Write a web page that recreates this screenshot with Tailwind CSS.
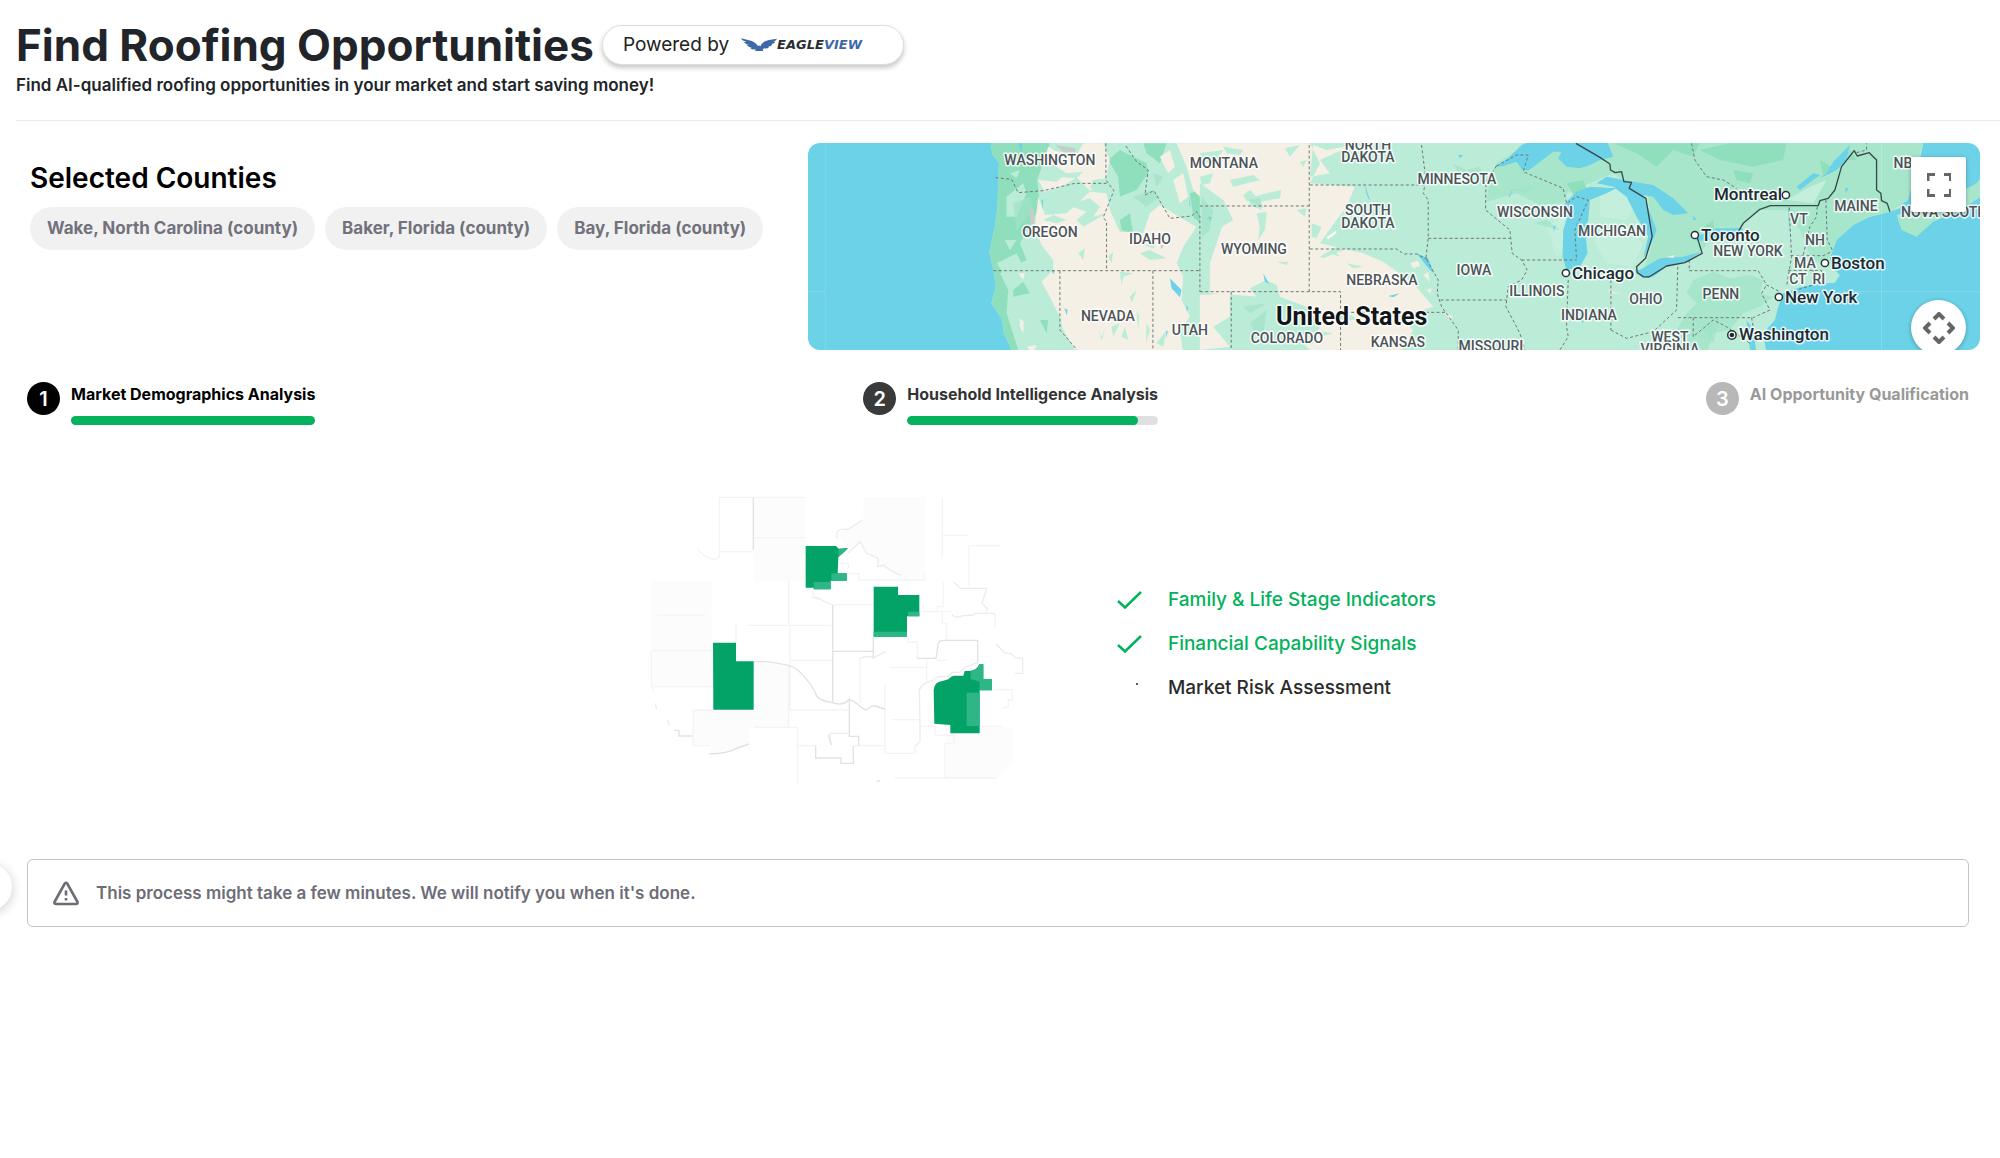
<!DOCTYPE html>
<html lang="en">
<head>
    <meta charset="UTF-8">
    <meta name="viewport" content="width=device-width, initial-scale=1.0">
    <title>Find Roofing Opportunities</title>
    <script src="https://cdn.jsdelivr.net/npm/@tailwindcss/browser@4"></script>
</head>
<body class="relative min-h-screen overflow-x-hidden bg-white font-['Inter',sans-serif] text-black">

    <!-- Sidebar toggle, mostly off the left edge -->
    <button aria-label="Open sidebar" class="absolute -left-9 top-[863px] h-12 w-12 rounded-full bg-white shadow-[0_2px_12px_rgba(0,0,0,0.2)]"></button>

    <header class="ml-4 border-b border-[#e9e9eb] pt-5 pb-6">
        <div class="flex items-center gap-2">
            <h1 class="text-[44px] leading-[50px] font-bold text-[#212529]">Find Roofing Opportunities</h1>
            <div class="flex h-10 w-[302px] items-center gap-3 rounded-full border border-[#dedede] bg-white pl-5 shadow-[0_3px_5px_rgba(0,0,0,0.22)]">
                <span class="text-[19px] leading-6 text-[#212121]">Powered by</span>
                <span class="flex items-center">
                    <svg class="h-[14px] w-9" viewBox="0 0 108 42" fill="#3e68a8" aria-hidden="true">
                        <path d="M0 1 L24 7 Q43 11 51 25 L54 22 L58 25 Q64 9 84 6 L108 2 Q106 8 98 10 L103 12 Q98 18 91 18 L94 20 Q89 26 82 25 L84 28 Q78 33 70 31 L65 34 L67 39 L42 39 L45 34 Q34 37 27 29 L34 28 Q22 28 17 20 L25 20 Q14 20 9 12 L17 12 Q4 9 0 1Z"/>
                    </svg>
                    <span class="font-['DejaVu_Sans',sans-serif] text-[13px] leading-4 font-bold text-[#2a2d34] italic">EAGLE<span class="text-[#3e68a8]">VIEW</span></span>
                </span>
            </div>
        </div>
        <p class="mt-1 text-[17px] leading-[22px] font-semibold text-[#212529]">Find AI-qualified roofing opportunities in your market and start saving money!</p>
    </header>

    <main class="pr-5 pl-[27px]">
        <section class="flex pt-[22px]">
            <div class="flex-1 pt-[17px] pl-[3px]">
                <h2 class="text-[28px] leading-9 font-semibold">Selected Counties</h2>
                <ul class="mt-[11px] flex gap-[10px] text-[17px] leading-[43px] font-bold whitespace-nowrap text-[#72727c]">
                    <li class="rounded-full bg-[#f1f1f1] px-[17px]">Wake, North Carolina (county)</li>
                    <li class="rounded-full bg-[#f1f1f1] px-[17px]">Baker, Florida (county)</li>
                    <li class="rounded-full bg-[#f1f1f1] px-[17px]">Bay, Florida (county)</li>
                </ul>
            </div>

            <div class="relative h-[207px] w-3/5 overflow-hidden rounded-xl bg-[#6bd2e8]">
                <svg class="h-full w-full" viewBox="0 0 1172 207" preserveAspectRatio="xMidYMid slice" role="img" aria-label="Map of the United States">
                    <g transform="scale(0.33333) translate(-24 -39)">
                        <!-- land -->
                        <path fill="#bbecd8" d="M571 30 L578 75 L597 100 L592 240 L585 290 L568 365 L580 420 L588 470 L574 520 L605 565 L612 610 L640 670 L2900 670 L2890 610 L2925 570 L2935 530 L2950 490 L3000 472 L3050 462 L3105 458 L3120 435 L3095 410 L3090 385 L3110 330 L3160 285 L3205 262 L3270 245 L3300 235 L3310 200 L3360 90 L3372 30Z"/>
                        <path fill="#a8e6cc" d="M2090 100 L2200 30 L3372 30 L3350 110 L3325 210 L3270 245 L3205 262 L3160 285 L3110 330 L3090 385 L3040 400 L3000 300 L2960 240 L2880 240 L2810 300 L2760 290 L2700 370 L2560 410 L2530 430 L2560 330 L2545 200 L2440 130 L2300 190 L2290 220 L2220 225 L2150 190 L2060 215 L2070 140Z M2680 450 L2740 425 L2790 445 L2850 435 L2890 450 L2880 490 L2920 500 L2880 530 L2830 550 L2790 600 L2740 610 L2720 670 L2600 670 L2590 620 L2630 600 L2660 550 L2690 520 L2660 490Z M3305 300 L3350 320 L3400 275 L3480 240 L3560 190 L3560 120 L3530 160 L3400 230 L3290 255Z"/>
                        <path fill="#c5efdd" d="M2240 290 L2300 250 L2320 340 L2270 380Z M2380 330 L2480 290 L2530 340 L2500 410 L2420 400Z M2400 190 L2460 170 L2500 230 L2480 270 L2400 260Z M2960 210 L3030 170 L3080 150 L3040 220Z"/>
                        <!-- forests -->
                        <path fill="#8fdfbc" d="M571 30 L578 75 L597 100 L592 240 L585 290 L568 365 L580 420 L588 470 L574 520 L605 565 L612 610 L640 670 L655 660 L620 550 L625 480 L600 430 L680 390 L660 340 L720 230 L712 150 L750 40Z M925 90 L960 60 L1040 100 L1045 130 L1010 180 L960 200 L955 140Z M640 480 L670 455 L690 490 L640 500Z M720 570 L745 570 L740 610Z M1030 40 L1100 40 L1080 100 L1040 70Z M960 270 L990 250 L1000 310 L965 300Z M1170 190 L1200 180 L1200 280 L1180 260Z M2440 40 L2700 40 L2680 80 L2620 60 L2570 110 L2510 70Z M2700 60 L2790 40 L2960 40 L2950 90 L2860 110 L2760 90Z M2300 160 L2350 150 L2370 200 L2330 210Z M2700 300 L2740 270 L2745 310Z M2800 120 L2860 130 L2850 160 L2810 150Z M3060 90 L3110 120 L3070 140Z M3150 60 L3170 90 L3140 90Z"/>
                        <path fill="#bbecd8" d="M620 200 L670 160 L680 190 L650 260 L620 260Z M630 130 L660 120 L650 145Z M615 330 L650 330 L630 360Z M590 400 L650 370 L665 400 L610 430Z"/>
                        <!-- dry land -->
                        <path fill="#f4f0e5" d="M745 50 L765 62 L830 75 L850 40 L910 40 L930 90 L915 160 L870 182 L830 142 L790 168 L735 185 L715 150 L770 155 L800 130 L770 110 L735 90Z M715 200 L735 255 L800 250 L870 185 L920 190 L930 240 L960 305 L1030 310 L1050 250 L1080 225 L1140 262 L1190 290 L1150 350 L1130 400 L1150 440 L1145 510 L1170 560 L1140 600 L1150 670 L832 670 L790 600 L780 560 L750 500 L725 455 L760 420 L760 390 L725 345 L705 290Z M1130 40 L1530 40 L1560 100 L1530 160 L1665 170 L1640 230 L1595 290 L1560 340 L1690 370 L1750 395 L1840 460 L1900 530 L1800 560 L1840 600 L1800 670 L1540 670 L1480 610 L1380 500 L1230 490 L1230 400 L1270 280 L1230 230 L1180 180 L1160 110Z M660 565 L672 575 L670 610 L660 590Z M680 650 L710 645 L700 670Z M655 430 L675 430 L670 450Z M1560 90 L1660 45 L1580 60 L1540 45 L1530 140 L1590 130Z M1830 400 L1855 392 L1860 408 L1840 415Z M1870 435 L1885 425 L1890 455Z M1880 480 L1895 475 L1892 492Z M1930 545 L1960 560 L1950 570Z M1200 495 L1290 490 L1290 560 L1240 590 L1290 650 L1200 660Z M1080 80 L1110 60 L1125 110 L1105 130Z M1120 150 L1150 130 L1165 200 L1140 220Z"/>
                        <!-- green patches over dry land -->
                        <path fill="#bbecd8" d="M740 120 L800 130 L850 125 L830 145 L770 140Z M730 270 L760 255 L800 270 L770 280Z M800 225 L870 205 L900 230 L880 260 L920 250 L850 290 L830 270 L860 245Z M880 150 L925 145 L940 170 L890 180 L870 175Z M835 370 L855 355 L850 390Z M925 380 L940 365 L935 400Z M1020 370 L1050 360 L1100 385 L1050 390Z M1030 345 L1070 340 L1060 355Z M960 425 L1000 430 L970 440 L965 465Z M990 500 L1010 480 L995 520Z M895 600 L905 620 L918 590 L905 630Z M935 590 L960 580 L940 620Z M965 620 L975 590 L985 630Z M1010 540 L1018 560 L1015 600Z M1040 580 L1050 600 L1038 640Z M1070 640 L1100 600 L1090 650Z M1200 70 L1270 60 L1250 90 L1210 100Z M1270 50 L1330 60 L1320 75 L1280 70Z M1290 150 L1360 135 L1380 150 L1300 170Z M1330 195 L1350 180 L1370 200 L1340 215Z M1345 205 L1400 190 L1445 180 L1440 205 L1380 215 L1385 240 L1350 225Z M1370 250 L1400 245 L1395 300 L1375 330 L1380 290Z M1200 140 L1240 130 L1230 160 L1205 165Z M1455 55 L1500 45 L1470 80Z M1500 95 L1520 90 L1510 110Z M1490 240 L1520 235 L1515 260Z M1535 280 L1565 290 L1550 325 L1535 320Z M1560 380 L1610 350 L1630 360 L1570 385Z M1600 360 L1620 380 L1590 370Z M1200 160 L1270 210 L1300 270 L1250 300 L1230 390 L1200 440Z M1430 395 L1465 395 L1460 405Z M1350 475 L1400 450 L1430 465 L1440 500 L1520 530 L1560 590 L1540 640 L1500 650 L1420 640 L1360 660 L1300 610 L1330 560 L1300 540 L1370 500Z M1380 345 L1400 340 L1390 355Z M1600 570 L1640 550 L1680 570Z M1540 600 L1600 610 L1560 620Z M1640 400 L1690 410 L1660 415Z"/>
                        <path fill="#9fe3c7" opacity=".7" d="M640 220 L690 200 L700 240 L650 300Z M1000 200 L1060 180 L1080 200 L1040 230Z M1060 130 L1090 140 L1070 170Z M1205 200 L1240 240 L1230 300 L1205 320Z M1345 210 L1380 205 L1390 235Z M1350 580 L1400 540 L1390 620 L1360 600Z M1960 100 L2000 120 L1980 140Z M2200 280 L2240 270 L2280 300Z M2130 180 L2200 170 L2180 190Z M1330 530 L1400 520 L1350 550Z M2690 500 L2710 480 L2700 530Z M2700 590 L2760 560 L2740 640Z M2000 120 L2040 110 L2050 140Z"/>
                        <path fill="#c9cdca" d="M765 45 L800 50 L828 55 L825 72 L790 65Z M690 238 L702 240 L705 280 L690 285Z M1080 345 L1092 345 L1086 357Z"/>
                        <path fill="#fff" d="M1580 322 L1608 302 L1610 308 L1585 328Z"/>
                        <!-- lakes -->
                        <path fill="#6bd2e8" d="M2085 110 L2125 85 L2165 45 L2200 30 L2420 30 L2440 80 L2400 90 L2370 105 L2340 115 L2300 110 L2275 85 L2285 65 L2260 65 L2215 100 L2185 122 L2165 118 L2150 95 L2110 108Z M2290 225 L2330 185 L2370 170 L2450 175 L2420 190 L2370 210 L2365 270 L2355 300 L2363 370 L2340 410 L2300 420 L2288 380 L2290 300 L2305 250Z M2420 140 L2500 155 L2560 165 L2620 205 L2665 250 L2620 255 L2590 240 L2560 200 L2530 195 L2570 300 L2555 340 L2530 385 L2545 320 L2510 260 L2480 200 L2440 170 L2390 160Z M2520 420 L2580 385 L2650 380 L2705 365 L2650 400 L2600 410 L2560 440 L2530 445 L2505 420Z M2685 322 L2750 295 L2830 295 L2820 315 L2750 330 L2690 332Z M1110 445 L1145 480 L1140 502 L1115 475Z M655 40 L668 40 L665 70Z M725 210 L730 208 L728 240Z M793 535 L803 540 L801 555Z M1168 200 L1172 230 L1168 225Z M1160 525 L1165 535 L1160 545Z M1100 600 L1104 605 L1098 625Z M755 422 L765 422 L760 432Z M1225 260 L1235 262 L1230 272Z M1390 430 L1408 462 L1395 455Z M1690 150 L1712 215 L1703 200Z M1850 370 L1885 385 L1902 430 L1890 420Z M1765 498 L1800 490 L1780 502Z M1975 75 L1990 75 L1980 85Z M2125 200 L2140 175 L2130 200Z M2260 290 L2268 285 L2262 305Z M2345 570 L2352 572 L2347 580Z M3080 130 L3100 95 L3150 45 L3140 90 L3110 120 L3060 145Z M2990 170 L3040 130 L3060 135 L3000 180Z M2965 235 L2970 235 L2968 320Z M3135 175 L3145 175 L3138 190Z M2840 570 L2860 600 L2870 670 L2850 660 L2845 610Z M2680 255 L2690 270 L2680 270Z"/>
                        <path fill="#fbe5e2" d="M2425 478 L2440 485 L2465 490 L2430 490Z M2600 380 L2625 375 L2620 384Z"/>
                        <!-- tile seams -->
                        <path stroke="#fff" stroke-opacity=".25" stroke-width="2" fill="none" d="M76 40V660 M24 485H76 M3245 40V660 M3120 485H3540"/>
                        <!-- state borders -->
                        <g fill="none" stroke="#6e7876" stroke-width="3" stroke-dasharray="9 7">
                            <path d="M587 143 L635 148 L655 188 L730 182 L825 160 L922 160 M918 40 V150 L942 182 L910 262 L920 275 V420 M580 422 H1200 M978 48 L1010 95 L1045 120 L1035 195 L1062 182 L1110 265 L1175 258 L1190 245 L1200 260 V485 M780 422 V600 L832 660 M1059 422 V660"/>
                            <path d="M1200 228 H1528 M1528 45 V485 M1200 485 H1622 V660 M1294 485 V660 M1530 165 H1875 M1530 357 H1790 L1812 372 H1850 L1882 388 M1865 45 L1878 150 L1870 190 L1885 210 V325 L1878 385 L1915 450 L1912 490 L1925 530 L1975 600 V660 M1885 325 H2130 M1922 510 H2120 M1622 547 H1940 M2090 108 L2058 155 L2057 240 L2130 300 L2137 370 L2165 390 L2182 420 L2165 450 L2125 470 L2118 530 L2160 610 L2175 660 M2165 390 H2330 M2090 108 L2150 75 H2185 L2170 125 L2290 175 L2300 220 L2330 200 L2365 210 L2325 300 L2330 390 M2305 450 L2300 590 L2305 620 L2280 660 M2433 450 V600 M2433 600 L2480 625 L2560 605 L2630 540 L2634 405 M2668 390 V422 H2875 L2900 465 L2940 485 M2634 563 H2860 L2910 540 L2885 490 L2900 465 M2680 563 V620 L2740 570 L2780 590 L2850 640 M2855 563 L2870 640"/>
                            <path d="M2675 40 L2685 90 L2720 140 L2770 150 L2810 175 M2968 232 L2975 380 L2960 470 M3052 230 L3050 260 L3030 290 L3010 375 M3078 210 L3082 330 L3100 365 M2972 377 L3070 377 L3095 365 M2965 421 H3065 V460 M3040 421 V465 L2990 480 M3170 68 L3200 60 V40 M2550 650 L2600 620"/>
                        </g>
                        <path fill="none" stroke="#38474b" stroke-width="4" stroke-linejoin="round" d="M2328 40 L2400 82 L2430 102 L2432 120 L2446 128 L2465 125 L2472 155 L2495 157 L2488 175 L2538 205 L2557 320 L2537 385 L2510 410 L2512 428 L2530 440 L2547 441 L2600 408 L2655 398 L2707 370 L2692 322 M2815 305 L2830 280 L2880 238 L2912 227 H3055 L3060 212 L3085 205 L3105 180 L3125 110 L3163 62 L3172 78 L3208 68 L3230 90 V180 L3243 190 L3245 212 L3262 220 L3270 245"/>
                    </g>
                    <!-- state names -->
                    <g class="fill-[#4d5358] stroke-white/80 stroke-3 font-['Roboto',sans-serif] text-sm font-medium [paint-order:stroke] [stroke-linejoin:round] [text-anchor:middle]">
                        <text x="242" y="22">WASHINGTON</text>
                        <text x="242" y="94">OREGON</text>
                        <text x="342" y="101">IDAHO</text>
                        <text x="416" y="25">MONTANA</text>
                        <text x="300" y="178">NEVADA</text>
                        <text x="382" y="192">UTAH</text>
                        <text x="446" y="111">WYOMING</text>
                        <text x="479" y="200">COLORADO</text>
                        <text x="560" y="7">NORTH</text>
                        <text x="560" y="19">DAKOTA</text>
                        <text x="560" y="72">SOUTH</text>
                        <text x="560" y="85">DAKOTA</text>
                        <text x="649" y="41">MINNESOTA</text>
                        <text x="574" y="142">NEBRASKA</text>
                        <text x="590" y="204">KANSAS</text>
                        <text x="683" y="208">MISSOURI</text>
                        <text x="666" y="132">IOWA</text>
                        <text x="727" y="74">WISCONSIN</text>
                        <text x="729" y="153">ILLINOIS</text>
                        <text x="781" y="177">INDIANA</text>
                        <text x="804" y="93">MICHIGAN</text>
                        <text x="838" y="161">OHIO</text>
                        <text x="862" y="199">WEST</text>
                        <text x="862" y="211">VIRGINIA</text>
                        <text x="913" y="156">PENN</text>
                        <text x="940" y="113">NEW YORK</text>
                        <text x="991" y="81">VT</text>
                        <text x="1007" y="102">NH</text>
                        <text x="997" y="125">MA</text>
                        <text x="990" y="141">CT</text>
                        <text x="1011" y="141">RI</text>
                        <text x="1048" y="68">MAINE</text>
                        <text x="1095" y="25">NB</text>
                        <text x="1138" y="74">NOVA SCOTIA</text>
                    </g>
                    <g class="fill-[#202b30] stroke-white/80 stroke-3 font-['Roboto',sans-serif] text-[17px] font-medium [paint-order:stroke] [stroke-linejoin:round]">
                        <text x="906" y="57">Montreal</text>
                        <text x="893" y="98">Toronto</text>
                        <text x="764" y="136">Chicago</text>
                        <text x="1023" y="126">Boston</text>
                        <text x="977" y="160">New York</text>
                        <text x="931" y="197">Washington</text>
                        <text x="468" y="182" class="fill-[#111517] text-[25px] font-bold">United States</text>
                    </g>
                    <g class="fill-white stroke-[#263238] stroke-[1.5px]">
                        <circle cx="978" cy="52" r="3.6"/>
                        <circle cx="887" cy="92" r="3.6"/>
                        <circle cx="758" cy="130" r="3.6"/>
                        <circle cx="1017" cy="120" r="3.6"/>
                        <circle cx="971" cy="154" r="3.6"/>
                        <circle cx="924" cy="192" r="4.2"/>
                        <circle cx="924" cy="192" r="1.6" fill="#111"/>
                    </g>
                </svg>
                <button aria-label="Toggle fullscreen view" class="absolute top-[14px] right-[14px] flex h-[55px] w-[55px] items-center justify-center rounded-xs bg-white shadow-[0_1px_4px_rgba(0,0,0,0.3)]">
                    <svg class="h-6 w-6" viewBox="0 0 24 24" fill="none" stroke="#666" stroke-width="3"><path d="M1 8V1.500H8 M17 1.500H23.500V8 M23.500 16V22.500H17 M8 22.500H1V16"/></svg>
                </button>
                <button aria-label="Map camera controls" class="absolute top-[157px] right-[14px] flex h-[55px] w-[55px] items-center justify-center rounded-full bg-white shadow-[0_1px_4px_rgba(0,0,0,0.3)]">
                    <svg class="h-8 w-8" viewBox="0 0 32 32" fill="none" stroke="#666" stroke-width="4"><path d="M11 7 L16 2 L21 7 M11 25 L16 30 L21 25 M7 11 L2 16 L7 21 M25 11 L30 16 L25 21"/></svg>
                </button>
            </div>
        </section>

        <ol class="mt-8 mr-[11px] flex justify-between text-base leading-6 font-bold">
            <li class="flex gap-[11px]">
                <span class="flex h-[33px] w-[33px] items-center justify-center rounded-full bg-black text-xl font-semibold text-white">1</span>
                <div>
                    <p>Market Demographics Analysis</p>
                    <div class="mt-[10px] h-[9px] rounded-full bg-[#03b25c]"></div>
                </div>
            </li>
            <li class="flex gap-[11px] text-[#333]">
                <span class="flex h-[33px] w-[33px] items-center justify-center rounded-full bg-[#3a3a3a] text-xl font-semibold text-white">2</span>
                <div>
                    <p>Household Intelligence Analysis</p>
                    <div class="mt-[10px] h-[9px] overflow-hidden rounded-full bg-[#e0e0e0]">
                        <div class="h-full rounded-full bg-[#03b25c]" style="width: 92%"></div>
                    </div>
                </div>
            </li>
            <li class="flex gap-[11px] text-[#999]">
                <span class="flex h-[33px] w-[33px] items-center justify-center rounded-full bg-[#b8b8b8] text-xl font-semibold text-white">3</span>
                <p>AI Opportunity Qualification</p>
            </li>
        </ol>

        <section class="mt-[55px] mr-[11px] flex items-center justify-center gap-16 pl-[70px]">
            <svg class="h-80 w-[420px]" viewBox="0 0 1260 960" fill="none" aria-hidden="true">
                <path fill="#fcfcfc" d="M370 52H525V200H528V303H370Z M700 52H885V300L815 287L745 260L745 235L710 220L690 185L655 210L625 160L700 120Z M64 303H245V512H64Z M64 514H248V620H64Z M372 545L475 555V742H372Z M190 690H370V742H357V795L300 818L238 822V797H190Z M945 742H1148V850L1100 895H945Z"/>
                <g stroke="#f4f4f4" stroke-width="4">
                    <path d="M268 52H525 M370 173H525 M268 215H368 M268 52V230Q262 240 248 237Q220 230 202 205 M64 512H245 M64 620H248 M64 512V620L72 636 M318 435V490 M355 436H605 M476 300V436 M480 436V690 M480 541H605 M476 555V742 M190 690V797H238 M190 690H250 M372 742H503V915 M480 690H655 M503 797H557 M672 797H762 M686 300H884V280 M655 281H686V300 M608 374H730 M937 55V230 M937 166H1012 M1017 320V197H1113 M940 305V380H922V395H937V430H950V480 M878 395H965 M835 470V486H862V535 M690 535V670 M780 562H890 M890 540V605 M765 615V820H855V797 M787 719H870 M870 739H915V766H972V790H945V893 M795 894H1100 M1050 739H1115 M1090 629H1147V660H1135V680L1118 685 M80 405H225 M1095 402V445 M950 541H918 M630 250H655V265 M548 330V352"/>
                    <path stroke="#ececec" d="M548 352Q560 350 575 360T605 373 M620 175L622 155Q630 145 655 148L697 120 M655 218L690 185L710 220L745 235L743 260L762 255Q780 275 815 286 M988 325H1070L1056 370L1072 385L1068 397 M965 402Q975 418 1000 407L1030 405L1035 400H1095 M1098 492L1125 520L1142 520L1155 533L1178 535V580H1155 M690 535Q710 525 730 533L768 515 M870 739V785L857 797 M870 739L868 630Q875 610 910 600L925 590H955L965 577H990L1005 562L1042 548 M600 790V760H655 M76 670L80 688 M112 720L118 735 M970 305L988 322"/>
                    <path stroke="#e2e2e2" d="M370 52V210 M608 374V670 M608 514H730V470 M730 514V535 M372 545H410Q440 548 475 556Q500 562 520 587Q550 620 560 648Q570 662 607 668Q640 680 658 657L680 670Q700 690 710 690Q725 675 735 678L765 687 M658 657V769H686V797 M595 765L605 795 M133 751H147V768H188 M557 797V834H633V850H670V797 M862 535H918L925 490Q928 481 940 481H1043V548 M238 822Q290 822 325 803L357 792 M740 903H750"/>
                </g>
                <path fill="#03a367" d="M527 198H618L626 206L654 204L640 218L625 232L623 280H650V302H602V328H551V323H527Z M731 320H804V345H868V409H831V470H731Z M249 488H318V544H371V689H250Z M911 630Q912 605 940 602L955 598Q962 588 975 587H1000L1004 573H1020Q1042 570 1048 553H1060V597H1086V631H1049V760H961V735L913 731Z"/>
                <path fill="#2eb686" d="M626 207L654 204L640 218L625 230Z M604 280H650V302H604Z M551 306H602V328H551Z M731 455H831V470H731Z M834 395H868V409H834Z M1022 573Q1042 568 1048 553H1060V597H1086V631H1049V605L1022 597Z M1010 638H1049V738H1010Z"/>
            </svg>

            <ul class="space-y-4 pt-2 text-[19px] leading-6 font-medium whitespace-nowrap text-[#2b2b2b]">
                <li class="flex items-center gap-[26px] text-[#03b25c]">
                    <svg class="h-7 w-7" viewBox="0 0 28 28" fill="none" stroke="currentColor" stroke-width="2.500" aria-hidden="true"><path d="M4 15 L11 21.500 L27 6"/></svg>
                    Family &amp; Life Stage Indicators
                </li>
                <li class="flex items-center gap-[26px] text-[#03b25c]">
                    <svg class="h-7 w-7" viewBox="0 0 28 28" fill="none" stroke="currentColor" stroke-width="2.500" aria-hidden="true"><path d="M4 15 L11 21.500 L27 6"/></svg>
                    Financial Capability Signals
                </li>
                <li class="flex items-center gap-[26px]">
                    <svg class="h-7 w-7" viewBox="0 0 28 28" fill="#222" aria-hidden="true"><circle cx="23" cy="10" r="1"/></svg>
                    Market Risk Assessment
                </li>
            </ul>
        </section>

        <div role="status" class="mt-[59px] mr-[11px] flex items-center gap-4 rounded-md border border-[#c4c4c8] px-6 py-[19px] text-[17px] leading-7 font-semibold text-[#6d6d78]">
            <svg class="h-7 w-7" viewBox="0 0 28 28" fill="none" stroke="currentColor" stroke-width="2.600" stroke-linejoin="round" aria-hidden="true"><path d="M12.800 4.500 L2.500 23 Q2 25 4 25 H24 Q26 25 25.500 23 L15.200 4.500 Q14 3 12.800 4.500Z M14 11.500 V16.500 M14 19 V21.500"/></svg>
            <p>This process might take a few minutes. We will notify you when it's done.</p>
        </div>
    </main>
</body>
</html>
